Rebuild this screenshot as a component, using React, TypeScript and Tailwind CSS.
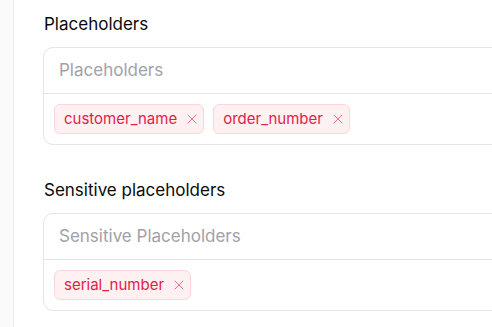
import { X } from 'lucide-react'

interface TagFieldProps {
  label: string
  placeholder: string
  tags: string[]
}

function Tag({ name }: { name: string }) {
  return (
    <span className="inline-flex items-center gap-[7px] h-[30px] pl-[9px] pr-[3px] rounded-[6px] border border-[#fdd5dc] bg-[#fff0f2] text-[15px] text-[#e11d48]">
      {name}
      <X size={16} strokeWidth={1.4} className="text-[#e8697f]" />
    </span>
  )
}

function TagField({ label, placeholder, tags }: TagFieldProps) {
  return (
    <div>
      <h3 className="text-[17px] font-normal text-[#0a0a0a] leading-6 ml-px">{label}</h3>
      <div className="mt-[11px] w-[480px] rounded-[10px] border border-[#e4e4e7] bg-white">
        <div className="h-[46px] flex items-center px-[15px] border-b border-[#e4e4e7]">
          <span className="text-[17px] text-[#a1a1aa]">{placeholder}</span>
        </div>
        <div className="h-[50px] flex items-center gap-[9px] px-[10px]">
          {tags.map((t) => (
            <Tag key={t} name={t} />
          ))}
        </div>
      </div>
    </div>
  )
}

export default function App() {
  return (
    <div className="flex h-[327px] w-[492px] overflow-hidden bg-white" style={{ fontFamily: 'Inter, sans-serif' }}>
      <div className="w-[14px] shrink-0 bg-[#fafafa] border-r border-[#efefef]" />
      <div className="flex-1 pl-[29px] pt-[12px] flex flex-col gap-[33px]">
        <TagField label="Placeholders" placeholder="Placeholders" tags={['customer_name', 'order_number']} />
        <TagField label="Sensitive placeholders" placeholder="Sensitive Placeholders" tags={['serial_number']} />
      </div>
    </div>
  )
}
